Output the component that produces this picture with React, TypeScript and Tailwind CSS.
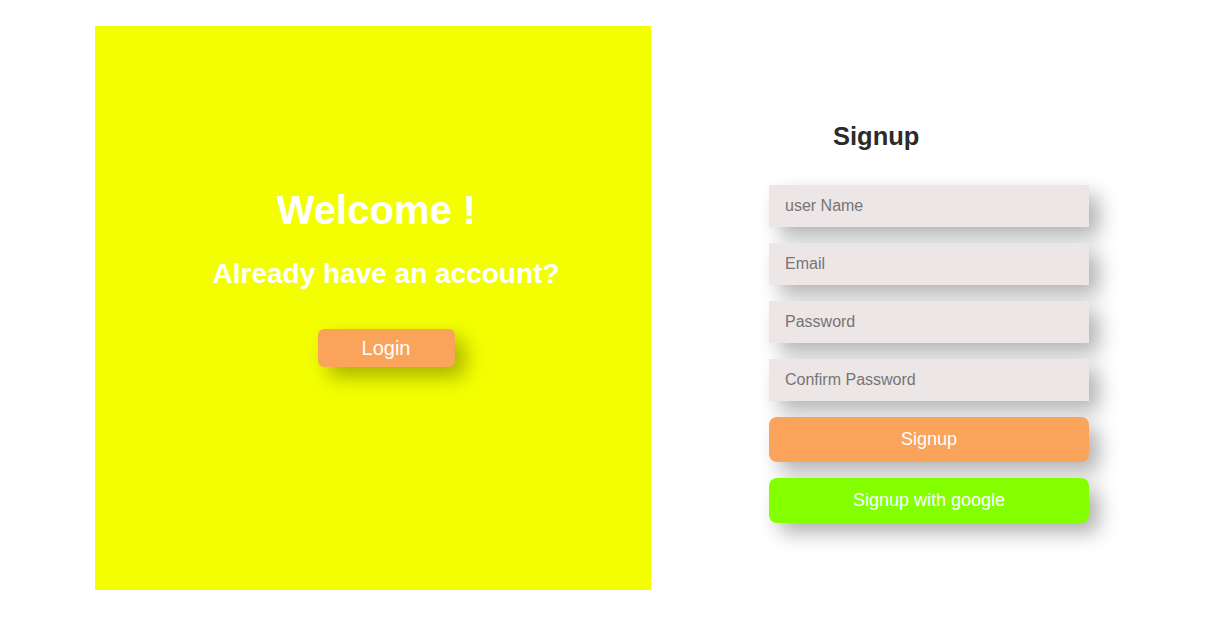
export default function App() {
  return (
    <div className="w-[1207px] h-[622px] bg-white font-['Liberation_Sans',Arial,sans-serif] flex items-start">
      {/* ===== LEFT PANEL ===== */}
      <div className="ml-[95px] mt-[26px] w-[556px] h-[564px] bg-[#f3ff00] flex flex-col items-center pt-[161px] pl-[26px]">
        <h1 className="mr-[19px] text-[40px] leading-[46px] font-bold text-white">Welcome !</h1>
        <h2 className="mt-[25px] text-[28px] leading-[32px] font-bold text-white">
          Already have an account?
        </h2>
        <button className="mt-[39px] w-[137px] h-[38px] rounded-[6px] bg-[#f9a45a] text-white text-[20px] shadow-[10px_10px_20px_rgba(0,0,0,0.3)]">
          Login
        </button>
      </div>

      {/* ===== RIGHT FORM ===== */}
      <div className="ml-[118px] mt-[122px] w-[320px] flex flex-col">
        <h2 className="pl-[64px] text-[25.5px] leading-[29px] font-bold text-[#2b2b2b]">Signup</h2>
        <div className="mt-[34px] flex flex-col gap-4">
          {["user Name", "Email", "Password", "Confirm Password"].map((p) => (
            <input
              key={p}
              placeholder={p}
              className="w-[320px] h-[42px] bg-[#ece6e6] px-4 text-[16px] text-[#333] placeholder:text-[#757575] outline-none shadow-[10px_10px_20px_rgba(0,0,0,0.3)]"
            />
          ))}
          <button className="h-[45px] rounded-[8px] bg-[#f9a45a] text-white text-[18px] shadow-[10px_10px_20px_rgba(0,0,0,0.3)]">
            Signup
          </button>
          <button className="h-[45px] rounded-[8px] bg-[#84ff00] text-white text-[18px] shadow-[10px_10px_20px_rgba(0,0,0,0.3)]">
            Signup with google
          </button>
        </div>
      </div>
    </div>
  );
}
